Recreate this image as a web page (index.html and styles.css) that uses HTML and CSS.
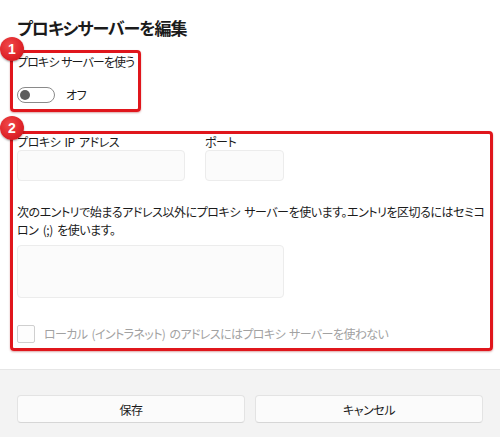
FILE: index.html
```html
<!DOCTYPE html>
<html lang="ja">
<head>
<meta charset="utf-8">
<link rel="stylesheet" href="styles.css">
</head>
<body>
<div class="dialog">
  <div class="content">
    <h1 class="title">プロキシサーバーを編集</h1>
    <section class="mark mark-1">
      <span class="badge">1</span>
      <div class="label">プロキシ サーバーを使う</div>
      <div class="toggle-row">
        <span class="toggle"><span class="knob"></span></span>
        <span class="toggle-text">オフ</span>
      </div>
    </section>
    <section class="mark mark-2">
      <span class="badge">2</span>
      <div class="fields">
        <div class="field field-ip">
          <div class="label">プロキシ IP アドレス</div>
          <div class="input input-ip"></div>
        </div>
        <div class="field field-port">
          <div class="label">ポート</div>
          <div class="input input-port"></div>
        </div>
      </div>
      <p class="desc">次のエントリで始まるアドレス以外にプロキシ サーバーを使います。エントリを区切るにはセミコロン (;) を使います。</p>
      <div class="input textarea"></div>
      <div class="check-row">
        <span class="checkbox"></span>
        <span class="check-text">ローカル (イントラネット) のアドレスにはプロキシ サーバーを使わない</span>
      </div>
    </section>
  </div>
  <div class="footer">
    <button class="btn">保存</button>
    <button class="btn">キャンセル</button>
  </div>
</div>
</body>
</html>
```
FILE: styles.css
```css
* { box-sizing: border-box; }
html, body {
  margin: 0;
  padding: 0;
  background: #ffffff;
}
body {
  font-family: "Noto Sans CJK JP", "Noto Sans", sans-serif;
  font-feature-settings: "palt";
  color: #1b1b1b;
  font-size: 12px;
  letter-spacing: -0.45px;
  word-spacing: 2px;
  width: 500px;
  height: 437px;
  overflow: hidden;
}
.dialog {
  display: flex;
  flex-direction: column;
  height: 437px;
}
.content {
  padding: 0 7px 18px 10px;
  flex: 1;
}
.title {
  margin: 0;
  padding: 16px 0 0 7px;
  height: 50px;
  font-size: 17px;
  line-height: 24px;
  font-weight: 700;
  letter-spacing: -1px;
}
.mark {
  position: relative;
  border: 3px solid #e0161c;
  border-radius: 4px;
  padding-left: 4px;
  box-shadow: 0 1px 2px rgba(150, 0, 0, 0.35);
}
.mark-1 {
  width: 131px;
  height: 62px;
}
.mark-1 .label {
  letter-spacing: -0.9px;
  word-spacing: 1px;
}
.mark-2 {
  margin-top: 19px;
  height: 220px;
  padding-right: 4px;
}
.badge {
  position: absolute;
  left: -13px;
  top: -16px;
  width: 24px;
  height: 24px;
  border-radius: 50%;
  background: radial-gradient(circle at 40% 35%, #f04a4a 0%, #e0252a 55%, #c21318 100%);
  color: #fff;
  font-family: "Liberation Sans", sans-serif;
  font-weight: 700;
  font-size: 14px;
  letter-spacing: 0;
  line-height: 24px;
  text-align: center;
  box-shadow: 0 1px 2px rgba(0,0,0,0.35);
}
.mark-2 .badge { top: -18px; }
.label {
  line-height: 18px;
  height: 18px;
  white-space: nowrap;
}
.toggle-row {
  display: flex;
  align-items: center;
  margin-top: 14px;
  gap: 11px;
}
.toggle {
  display: flex;
  align-items: center;
  width: 38px;
  height: 16px;
  border: 1px solid #8a8a8a;
  border-radius: 8px;
  padding-left: 2px;
}
.knob {
  width: 10px;
  height: 10px;
  border-radius: 50%;
  background: #5c5c5c;
}
.toggle-text { line-height: 18px; margin-top: 1px; }
.fields {
  display: flex;
  gap: 20px;
}
.mark-2 .label {
  line-height: 16px;
  height: 16px;
}
.input {
  background: #fbfbfb;
  border: 1px solid #ececec;
  border-radius: 4px;
}
.input-ip { width: 168px; height: 31px; }
.input-port { width: 79px; height: 31px; }
.desc {
  margin: 22px 0 0;
  line-height: 18px;
  width: 472px;
}
.textarea {
  margin-top: 6px;
  width: 267px;
  height: 53px;
}
.check-row {
  display: flex;
  align-items: center;
  margin-top: 27px;
  gap: 9px;
}
.checkbox {
  width: 18px;
  height: 18px;
  border: 1px solid #cfcfcf;
  border-radius: 2px;
  background: #fdfdfd;
}
.check-text {
  color: #a2a2a2;
  line-height: 18px;
  letter-spacing: -0.6px;
}
.footer {
  height: 68px;
  background: #f3f3f3;
  border-top: 1px solid #e6e6e6;
  display: flex;
  gap: 10px;
  padding: 25px 17px 0 17px;
}
.btn {
  font-family: inherit;
  font-feature-settings: "palt";
  font-size: 12px;
  letter-spacing: -0.45px;
  color: #1b1b1b;
  height: 28px;
  flex: 1;
  background: #fbfbfb;
  border: 1px solid #e3e3e3;
  border-bottom-color: #d6d6d6;
  border-radius: 4px;
  padding: 0;
}
```
